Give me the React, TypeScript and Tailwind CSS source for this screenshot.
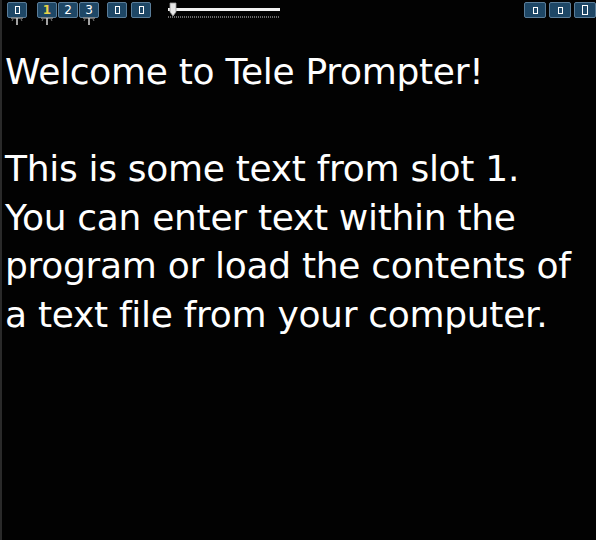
import React from "react";

const font = { fontFamily: '"DejaVu Sans", Tahoma, sans-serif' };

function Pin() {
  return (
    <svg width="14" height="9" viewBox="0 0 14 9" className="absolute left-1/2 top-full -translate-x-1/2">
      <path d="M1 1h12" stroke="#8a8a8a" strokeWidth="1.5" />
      <path d="M7 1v7" stroke="#d8d8d8" strokeWidth="1.5" />
      <path d="M3 2l-1 2M11 2l1 2" stroke="#777" strokeWidth="1" />
    </svg>
  );
}

function Btn({ children, pin, w = "w-[20px]" }: { children: React.ReactNode; pin?: boolean; w?: string }) {
  return (
    <div
      className={`relative flex h-[16px] ${w} items-center justify-center rounded-[2px] border border-[#5a7d99] bg-[#1e4766] text-[12px] leading-none text-white`}
      style={{ fontFamily: '"DejaVu Sans", sans-serif' }}
    >
      {children}
      {pin && <Pin />}
    </div>
  );
}

function Box() {
  return <span className="block h-[8px] w-[5px] border-[1.5px] border-white" />;
}

export default function App() {
  return (
    <div className="flex h-[540px] w-[596px] flex-col overflow-hidden border-l-2 border-[#2a2a2a] bg-[#020202]">
      <div className="flex h-[26px] items-start justify-between pt-[2px]">
        <div className="flex items-start">
          <div className="ml-[5px]">
            <Btn pin>
              <Box />
            </Btn>
          </div>
          <div className="ml-[10px] flex gap-[1px]">
            <Btn pin>
              <span className="font-bold text-[#e8d24a]">1</span>
            </Btn>
            <Btn>2</Btn>
            <Btn pin>3</Btn>
          </div>
          <div className="ml-[8px] flex gap-[4px]">
            <Btn>
              <Box />
            </Btn>
            <Btn>
              <Box />
            </Btn>
          </div>
          <svg width="116" height="20" viewBox="0 0 116 20" className="ml-[15px]">
            <rect x="2" y="6" width="112" height="3" fill="#f2f2f2" />
            {Array.from({ length: 56 }).map((_, i) => (
              <rect key={i} x={2 + i * 2} y="14" width="1" height="2" fill="#6a6a6a" />
            ))}
            <path d="M4 1h6v9l-3 4-3-4z" fill="#e8e8e8" stroke="#9a9a9a" strokeWidth="0.8" />
          </svg>
        </div>
        <div className="flex gap-[3px]">
          <Btn w="w-[22px]">
            <span className="block h-[7px] w-[5px] border-[1.5px] border-white" />
          </Btn>
          <Btn w="w-[22px]">
            <span className="block h-[7px] w-[5px] border-[1.5px] border-white" />
          </Btn>
          <Btn w="w-[22px]">
            <span className="block h-[10px] w-[6px] border-[1.5px] border-white" />
          </Btn>
        </div>
      </div>
      <div className="pl-[3px] pt-[22px] text-[36px] leading-[48.5px] tracking-[-0.3px] text-white" style={font}>
        <p>Welcome to Tele Prompter!</p>
        <p className="mt-[48.5px]">
          This is some text from slot 1.
          <br />
          You can enter text within the
          <br />
          program or load the contents of
          <br />a text file from your computer.
        </p>
      </div>
    </div>
  );
}
